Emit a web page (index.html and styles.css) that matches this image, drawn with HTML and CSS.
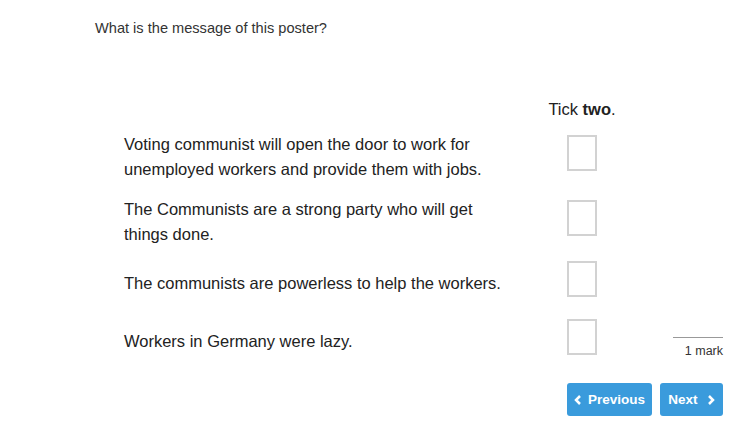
FILE: index.html
```html
<!DOCTYPE html>
<html>
<head>
    <meta charset="UTF-8">
    <title>Question</title>
<link rel="stylesheet" href="styles.css">
</head>
<body>
<p class="question">What is the message of this poster?</p>
<section class="task">
    <div class="row head">
        <span></span>
        <span class="tick">Tick <b>two</b>.</span>
    </div>
    <div class="row">
        <label class="answer" for="a1">Voting communist will open the door to work for unemployed workers and provide them with jobs.</label>
        <span class="box_cell"><input type="checkbox" id="a1" class="box"></span>
    </div>
    <div class="row">
        <label class="answer" for="a2">The Communists are a strong party who will get things done.</label>
        <span class="box_cell"><input type="checkbox" id="a2" class="box"></span>
    </div>
    <div class="row">
        <label class="answer" for="a3">The communists are powerless to help the workers.</label>
        <span class="box_cell"><input type="checkbox" id="a3" class="box"></span>
    </div>
    <div class="row">
        <label class="answer" for="a4">Workers in Germany were lazy.</label>
        <span class="box_cell"><input type="checkbox" id="a4" class="box"></span>
        <span class="mark">1 mark</span>
    </div>
</section>
<nav class="nav">
    <button class="btn prev">
        <svg width="8" height="12" viewBox="0 0 8 12"><path d="M6 2 L2 6 L6 10" fill="none" stroke="#fff" stroke-width="2.5"/></svg>
        Previous
    </button>
    <button class="btn next">
        Next
        <svg width="8" height="12" viewBox="0 0 8 12"><path d="M2 2 L6 6 L2 10" fill="none" stroke="#fff" stroke-width="2.5"/></svg>
    </button>
</nav>
</body>
</html>
```

FILE: styles.css
```css
html, body {
    margin: 0;
    padding: 0;
}
body {
    font-family: 'Liberation Sans', Arial, sans-serif;
    background: #FFF;
    color: #222;
}
.question {
    margin: 0;
    padding: 19px 0 0 95px;
    font-size: 14.6px;
    line-height: 18px;
    color: #333;
}
.task {
    margin: 60px 0 0 124px;
    width: 599px;
    display: flex;
    flex-direction: column;
    gap: 14px;
}
.row {
    display: grid;
    grid-template-columns: 423px 70px 1fr;
    align-items: center;
    font-size: 16.5px;
    line-height: 25px;
}
.head {
    margin-bottom: -5px;
}
.tick {
    text-align: center;
}
.tick b {
    font-weight: bold;
}
.answer {
    width: 388px;
    padding-top: 1px;
}
.box_cell {
    display: flex;
    justify-content: center;
}
.box {
    appearance: none;
    margin: 0 0 8px;
    width: 30px;
    height: 36px;
    border: 2px solid #d2d2d2;
    background: #FFF;
    box-sizing: border-box;
}
.mark {
    align-self: start;
    justify-self: end;
    margin-top: 18px;
    width: 50px;
    border-top: 1px solid #999;
    padding-top: 6px;
    text-align: right;
    font-size: 12.5px;
    line-height: 14px;
    color: #333;
}
.nav {
    display: flex;
    justify-content: flex-end;
    gap: 8px;
    width: 723px;
    margin-top: 20px;
}
.btn {
    display: flex;
    align-items: center;
    justify-content: center;
    gap: 6px;
    height: 33px;
    padding: 0;
    border: none;
    border-radius: 3px;
    background: #3a9bdc;
    color: #FFF;
    font-family: 'Liberation Sans', Arial, sans-serif;
    font-size: 13.5px;
    font-weight: bold;
}
.prev {
    width: 85px;
}
.next {
    width: 63px;
    gap: 9px;
}
```
